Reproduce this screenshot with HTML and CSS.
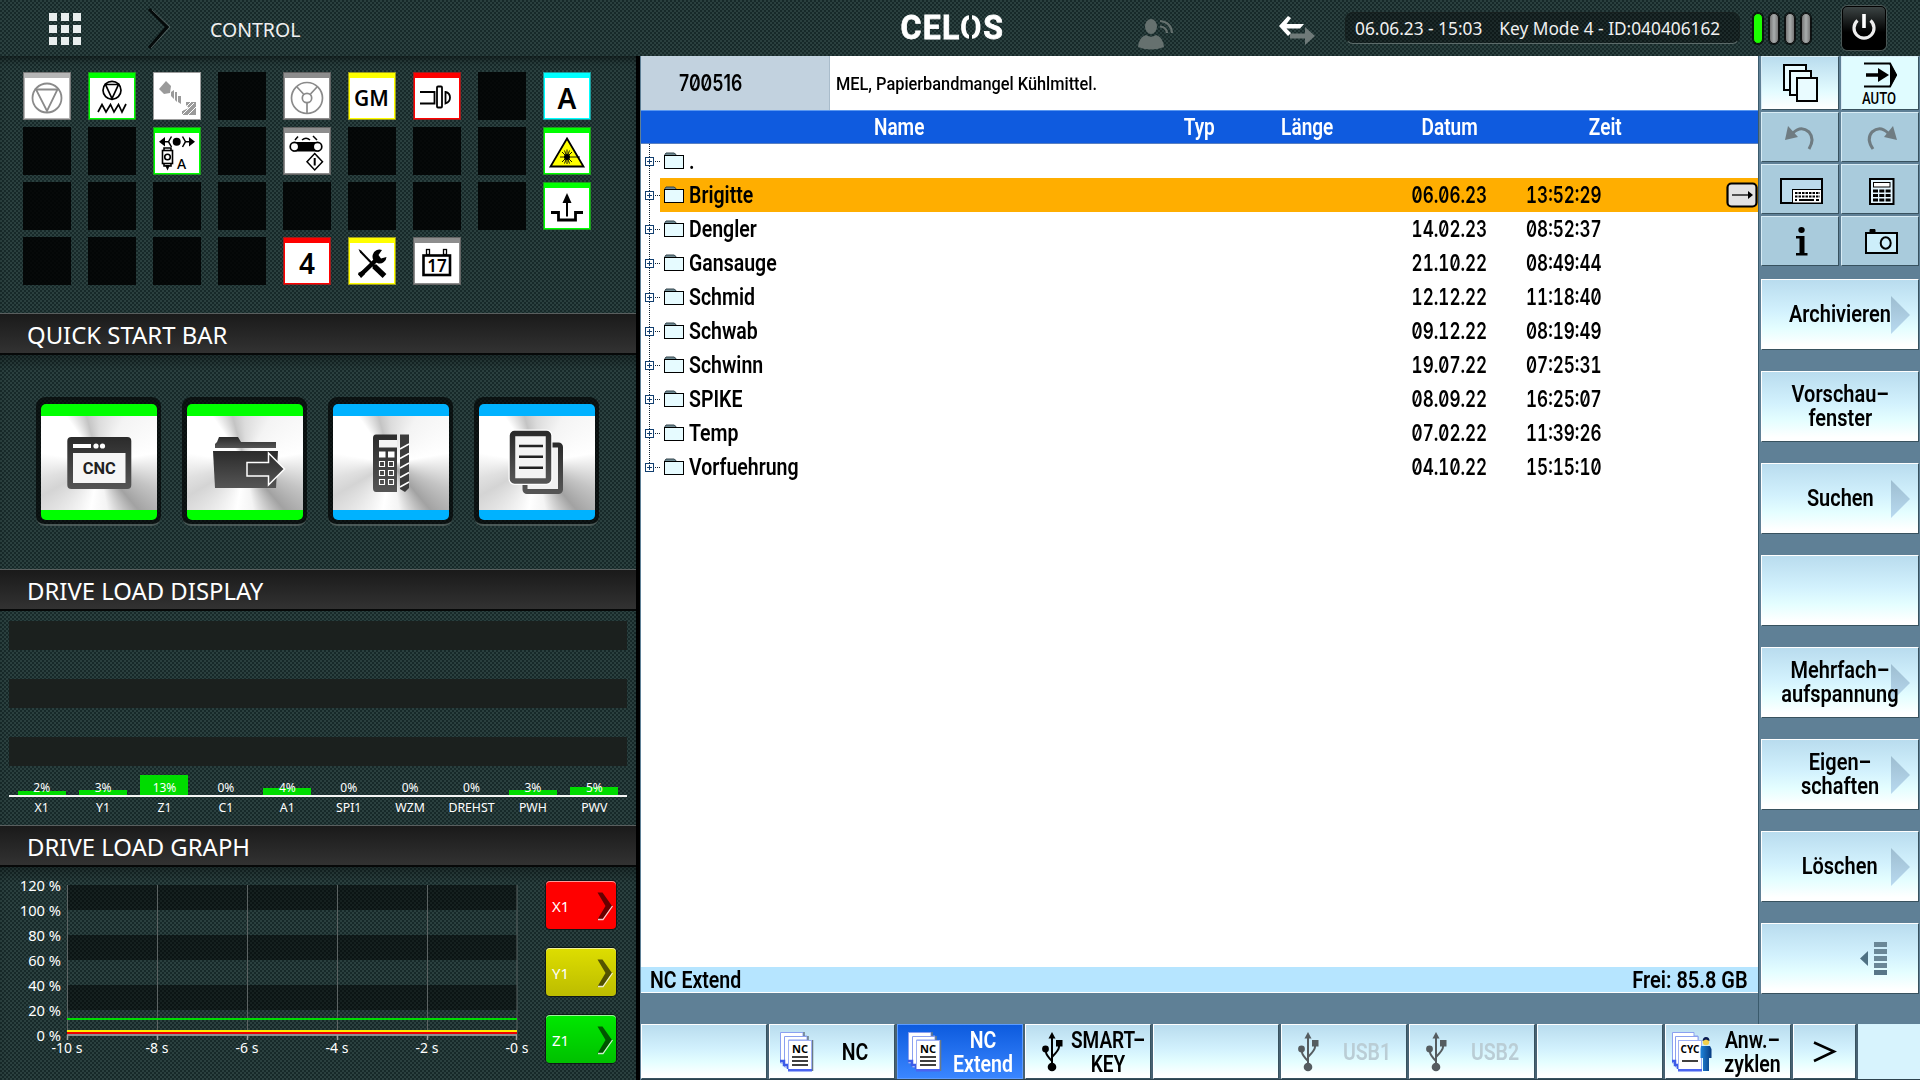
FILE: index.html
```html
<!DOCTYPE html>
<html lang="de">
<head>
<meta charset="utf-8">
<title>CELOS Control</title>
<link rel="stylesheet" href="styles.css">
</head>
<body>
<svg class="defs" width="0" height="0">
  <defs>
    <linearGradient id="ink" x1="0" y1="0" x2="0" y2="1"><stop offset="0" stop-color="#2b2b2b"/><stop offset="1" stop-color="#555"/></linearGradient>
    <linearGradient id="tri" x1="0" y1="0" x2="0" y2="1"><stop offset="0" stop-color="#9dbdd0"/><stop offset="1" stop-color="#b9daf0"/></linearGradient>
    <linearGradient id="man" x1="0" y1="0" x2="1" y2="0"><stop offset="0" stop-color="#1f86dc"/><stop offset="1" stop-color="#063a80"/></linearGradient>
    <symbol id="node" viewBox="0 0 48 34">
      <path d="M14 17.500H19" stroke="#102030" stroke-dasharray="1 1"/>
      <rect x="4.500" y="13.500" width="8" height="8" fill="#fff" stroke="#123f70"/><path d="M6 17.500H11M8.500 15V20" stroke="#123f70"/>
      <path d="M24 12V10.500L25 9H33L35 10.500V12Z" fill="#6f8a92" stroke="#33454d"/>
      <rect x="23.500" y="11.500" width="19" height="13" fill="#e6fbff" stroke="#000"/>
    </symbol>
    <symbol id="tree" viewBox="0 0 48 34"><path d="M8.500 0V34" stroke="#102030" stroke-dasharray="1 1"/><use href="#node"/></symbol>
    <symbol id="leaf" viewBox="0 0 48 34"><path d="M8.500 0V14" stroke="#102030" stroke-dasharray="1 1"/><use href="#node"/></symbol>
    <symbol id="usb" viewBox="1038 1025 28 54">
      <g fill="none" stroke="currentColor" stroke-width="2"><path d="M1052 1038V1066M1046 1049V1052Q1046 1055 1052 1061M1059 1044V1047Q1059 1050 1052 1057"/></g>
      <g fill="currentColor"><path d="M1052 1032L1055.500 1038.500H1048.500Z"/><circle cx="1052" cy="1067" r="4.300"/><circle cx="1045.500" cy="1049" r="3.400"/><rect x="1056" y="1040" width="6.500" height="6.500"/></g>
    </symbol>
    <symbol id="pages" viewBox="776 1025 40 54">
      <path d="M780.500 1032.500H803V1036H807V1040H788V1063H780.500Z" fill="#fff" stroke="#8ba0f0"/>
      <path d="M784.500 1036.500H807V1040H788.500V1067H784.500Z" fill="#fff" stroke="#8ba0f0"/>
      <path d="M780 1061H784V1065H788V1069" fill="none" stroke="#3c5ce8" stroke-width="2.500"/>
      <path d="M804 1032V1036M808 1036V1040M812.500 1040V1071" stroke="#6a7a86" stroke-width="1.500"/>
      <rect x="788.500" y="1040.500" width="23" height="30" fill="#fff" stroke="#9fb0f5"/>
      <rect x="788" y="1069" width="24" height="2.500" fill="#4a64f0"/>
    </symbol>
    <symbol id="chev" viewBox="0 0 18 30"><path d="M1.500 1.500H6.500L16 15L6.500 28.500H1.500L9.500 15Z" fill="#000" fill-opacity=".6"/><path d="M2 28.500H7L16.500 15" fill="none" stroke="#fff" stroke-opacity=".8" stroke-width="1.300"/></symbol>
    <symbol id="more" viewBox="0 0 20 38"><path d="M0 0L19 19L0 38Z" fill="url(#tri)"/></symbol>
  </defs>
</svg>

<div class="screen">
  <header class="top weave">
    <svg width="1920" height="56" viewBox="0 0 1920 56" class="top-art">
      <g fill="#e9eeee"><path d="M49 13h8v8h-8zM61 13h8v8h-8zM73 13h8v8h-8zM49 25h8v8h-8zM61 25h8v8h-8zM73 25h8v8h-8zM49 37h8v8h-8zM61 37h8v8h-8zM73 37h8v8h-8z"/></g>
      <path d="M149 9L167 27L149 48" fill="none" stroke="#050a0a" stroke-width="3"/><path d="M152 10L170 27L151 48" fill="none" stroke="#77817f" stroke-opacity=".6"/>
      <g fill="#66716f"><ellipse cx="1151" cy="26.500" rx="6" ry="7.500"/><path d="M1138 47Q1139 37 1146 35Q1151 38.500 1156 35Q1163 37 1164 47Q1151 52 1138 47Z"/></g>
      <g fill="none" stroke="#66716f" stroke-width="2.200"><path d="M1160 21Q1171 22 1172 33M1160 26.500Q1166.500 27 1167 33"/></g>
      <path d="M1315 36L1305 27V33.500H1290V38.500H1305V45Z" fill="#6f7a79"/>
      <path d="M1279 26L1288 16L1291 18L1286.500 24H1304L1300 28.500H1286.500L1291 33L1288 36Z" fill="#fff"/>
    </svg>
    <h1 class="title">CONTROL</h1>
    <div class="brand"><span>CEL</span><span class="brand-o">O</span><span>S</span></div>
    <div class="info"><span class="info-date">06.06.23 - 15:03</span><span>Key Mode 4 - ID:040406162</span></div>
    <div class="pills"><i class="on"></i><i></i><i></i><i></i></div>
    <button class="power"><svg width="44" height="44" viewBox="0 0 44 44"><path d="M15.500 14.500A10 10 0 1 0 28.500 14.500" fill="none" stroke="#eee" stroke-width="3.200"/><path d="M22 8V22" stroke="#fff" stroke-width="3.600"/></svg></button>
  </header>

  <aside class="left weave">
    <section class="status">
      <div class="tile plain silver"><svg viewBox="0 0 48 48"><g fill="none" stroke="#8a8a8a" stroke-width="1.800"><circle cx="24" cy="26" r="14.500"/><path d="M13 17.500H34.500L24 39Z"/></g></svg></div>
      <div class="tile green"><svg viewBox="0 0 48 48"><g fill="none" stroke="#000" stroke-width="1.700"><circle cx="24" cy="18.300" r="9"/><path d="M17.500 12.500H30.500L24 26.500ZM10 40L14 32.500L18 40L22.500 32.500L26 40L30.500 32.500L34 40L38 32"/></g></svg></div>
      <div class="tile white"><svg viewBox="0 0 48 48"><g fill="#9a9a9a"><path d="M13 9L18 14L17 21L11 22L6 17Z"/><path d="M18 20L21 18V27L18 24ZM22 20L24 20V30L22 28ZM25 24H28V32L25 30Z"/><path d="M33 30H43V43H29V39L36 36L33 33Z"/></g><path d="M29 43L41 31M34 44L43 35M29 39L38 30" stroke="#fff" stroke-width="1"/></svg></div>
      <div class="tile"></div>
      <div class="tile grey"><svg viewBox="0 0 48 48"><g fill="none" stroke="#8a8a8a" stroke-width="1.700"><circle cx="24" cy="26" r="15.500"/><circle cx="24" cy="26" r="4.700"/><path d="M20.500 22L14 15M27.500 22L34 15M24 31V41"/></g></svg></div>
      <div class="tile yellow"><svg viewBox="0 0 48 48"><text x="23.500" y="33.800" class="gm">GM</text></svg></div>
      <div class="tile red"><svg viewBox="0 0 48 48"><g fill="#fff" stroke="#000" stroke-width="1.800"><path d="M7 20H21.500V31.500H7"/><rect x="24" y="14.500" width="5" height="21" rx="1"/><path d="M32.500 20Q37 21 37 25.500Q37 30 32.500 31.500Z"/></g></svg></div>
      <div class="tile"></div>
      <div class="tile cyan"><svg viewBox="0 0 48 48"><text x="24" y="36.700" class="big">A</text></svg></div>

      <div class="tile"></div><div class="tile"></div>
      <div class="tile green"><svg viewBox="0 0 48 48"><circle cx="23.700" cy="14.700" r="4"/><path d="M6 14.700L12 10V19.500ZM42 14.700L36 10V19.500Z"/><path d="M12 14.700H15M33 14.700H36M18.500 9.500L15.500 14.700L18.500 20M29.500 9.500L32.500 14.700L29.500 20" fill="none" stroke="#000" stroke-width="1.500"/><g fill="none" stroke="#000" stroke-width="1.600"><rect x="9.500" y="23.500" width="10" height="13"/><path d="M11 23V21H18V23M11 37V39H18V37"/><circle cx="14.500" cy="30" r="2.800"/></g><path d="M12 38H17L14.500 43.500Z"/><text x="28.500" y="42" class="small">A</text></svg></div>
      <div class="tile"></div>
      <div class="tile grey"><svg viewBox="0 0 48 48"><rect x="10" y="15" width="26" height="9.500"/><circle cx="11.500" cy="19.700" r="4.300" fill="#fff" stroke="#000" stroke-width="1.700"/><circle cx="34.500" cy="19.700" r="4.300" fill="#fff" stroke="#000" stroke-width="1.700"/><g fill="none" stroke="#000" stroke-width="1.500"><path d="M12 13L15 9.500M19 13Q23 9.500 27 13M34 13L30 9M31.700 26.500L39.500 34.700L31.700 43L24 34.700Z"/><path d="M31.700 31V38.500" stroke-width="2"/></g></svg></div>
      <div class="tile"></div><div class="tile"></div><div class="tile"></div>
      <div class="tile green"><svg viewBox="0 0 48 48"><path d="M24 11.500L40.500 39.500H7.500Z" fill="#ff0" stroke="#000" stroke-width="1.800"/><path d="M24 22.500V37M17 30H37M19 25L29 35M29 25L19 35M21.500 23.500L26.500 36.500M26.500 23.500L21.500 36.500" stroke="#000" stroke-width=".9"/><circle cx="24" cy="30" r="3"/></svg></div>

      <div class="tile"></div><div class="tile"></div><div class="tile"></div><div class="tile"></div><div class="tile"></div><div class="tile"></div><div class="tile"></div><div class="tile"></div>
      <div class="tile green"><svg viewBox="0 0 48 48"><path d="M24 11L28.500 21H19.500Z"/><path d="M24 20V34.500" stroke="#000" stroke-width="2"/><path d="M8 30.500H15.500V38H32.500V30.500H40" fill="none" stroke="#000" stroke-width="2.800"/></svg></div>

      <div class="tile"></div><div class="tile"></div><div class="tile"></div><div class="tile"></div>
      <div class="tile red"><svg viewBox="0 0 48 48"><text x="24" y="36.700" class="big">4</text></svg></div>
      <div class="tile yellow"><svg viewBox="0 0 48 48"><path d="M10.500 12L13 13.500L25 26L23.500 27.500L12 15.500Z"/><path d="M26 29L36.500 39" stroke="#000" stroke-width="5.500"/><path d="M24 27L29 32" stroke="#000" stroke-width="3"/><path d="M11.500 39L24 27L30 21" stroke="#000" stroke-width="4.500" fill="none"/><path d="M10 36L16 33L17 37L13 41Z"/><path d="M34 13A7 7 0 1 0 38.500 20L33 21.500L30.500 18Z"/></svg></div>
      <div class="tile grey"><svg viewBox="0 0 48 48"><rect x="10.500" y="18.500" width="26.500" height="19.500" fill="none" stroke="#000" stroke-width="2.600"/><rect x="13.500" y="12.500" width="3" height="5" fill="#fff" stroke="#000" stroke-width="1.300"/><rect x="30.500" y="12.500" width="3" height="5" fill="#fff" stroke="#000" stroke-width="1.300"/><text x="24" y="34.500" class="day">17</text></svg></div>
    </section>

    <h2 class="bar"><span>QUICK START BAR</span></h2>
    <section class="quick">
      <div class="well"><button class="app g"><svg viewBox="0 0 116 94"><rect x="26.300" y="21" width="64" height="52" rx="4" fill="url(#ink)"/><rect x="32" y="37" width="52.500" height="30" fill="#f6f6f6"/><rect x="32" y="28" width="18" height="4" fill="#fff"/><circle cx="55" cy="30" r="2.600" fill="#fff"/><circle cx="61.500" cy="30" r="2.600" fill="#fff"/><text x="58.300" y="57.500" class="cnc" textLength="33" lengthAdjust="spacingAndGlyphs">CNC</text></svg></button></div>
      <div class="well"><button class="app g"><svg viewBox="0 0 116 94"><path d="M28 32V28L30 26L32 21H51L54 26H89V32Z" fill="url(#ink)"/><path d="M26 35H91L89 72H28Z" fill="url(#ink)"/><path d="M60 46.500H81.500V37L97.500 53L81.500 69V60H60Z" fill="url(#ink)" stroke="#fff" stroke-width="1.500"/></svg></button></div>
      <div class="well"><button class="app b"><svg viewBox="0 0 116 94"><path d="M64 18.500H43Q40 18.500 40 22V72Q40 76 43 76H64Z" fill="url(#ink)"/><rect x="46" y="24" width="18" height="7.500" fill="#f4f4f4"/><g fill="#fff"><rect x="46" y="35.500" width="6.500" height="6"/><rect x="55" y="35.500" width="6.500" height="6"/></g><g fill="none" stroke="#fff" stroke-width="1.100"><path d="M46.500 45.500h5v5h-5zM55.500 45.500h5v5h-5zM46.500 54.500h5v5h-5zM55.500 54.500h5v5h-5zM46.500 63.500h5v5h-5zM55.500 63.500h5v5h-5z"/></g><path d="M67 18.500H76V72L72 76L67 73Z" fill="#3c3c3c"/><path d="M67 33L76 28M67 42.500L76 37.500M67 52L76 47M67 61.500L76 56.500M67 71L76 66" stroke="#fff" stroke-width="1.500"/></svg></button></div>
      <div class="well"><button class="app b"><svg viewBox="0 0 116 94"><rect x="46" y="29" width="35.500" height="46.500" rx="2" fill="#f2f2f2" stroke="url(#ink)" stroke-width="5"/><rect x="33.500" y="17.500" width="36" height="47.500" rx="2" fill="#f4f4f4" stroke="#fff" stroke-width="8"/><rect x="33.500" y="17.500" width="36" height="47.500" rx="2" fill="#f4f4f4" stroke="url(#ink)" stroke-width="5.500"/><path d="M40 30H64M40 40.700H64M40 51.700H64" stroke="#222" stroke-width="2.500"/></svg></button></div>
    </section>

    <h2 class="bar"><span>DRIVE LOAD DISPLAY</span></h2>
    <section class="load">
      <div class="load-band"></div><div class="load-band"></div><div class="load-band"></div>
      <div class="load-cols">
        <div class="col"><i style="height:4px"></i><b>2%</b></div>
        <div class="col"><i style="height:5px"></i><b>3%</b></div>
        <div class="col"><i style="height:20px"></i><b>13%</b></div>
        <div class="col"><i style="height:0"></i><b>0%</b></div>
        <div class="col"><i style="height:7px"></i><b>4%</b></div>
        <div class="col"><i style="height:0"></i><b>0%</b></div>
        <div class="col"><i style="height:0"></i><b>0%</b></div>
        <div class="col"><i style="height:0"></i><b>0%</b></div>
        <div class="col"><i style="height:5px"></i><b>3%</b></div>
        <div class="col"><i style="height:8px"></i><b>5%</b></div>
      </div>
      <div class="load-names"><span>X1</span><span>Y1</span><span>Z1</span><span>C1</span><span>A1</span><span>SPI1</span><span>WZM</span><span>DREHST</span><span>PWH</span><span>PWV</span></div>
    </section>

    <h2 class="bar"><span>DRIVE LOAD GRAPH</span></h2>
    <section class="graph">
      <svg width="540" height="213" viewBox="0 867 540 213" class="chart">
        <g fill="#000" fill-opacity=".5"><rect x="67" y="885" width="450" height="25"/><rect x="67" y="935" width="450" height="25"/><rect x="67" y="985" width="450" height="25"/></g>
        <path d="M67.500 885V1035M157.500 885V1035M247.500 885V1035M337.500 885V1035M427.500 885V1035M517 885V1035" stroke="#5b6262"/>
        <path d="M67 1035H517" stroke="#8b8f8f" stroke-width="2"/><path d="M67.500 1035V1040M157.500 1035V1040M247.500 1035V1040M337.500 1035V1040M427.500 1035V1040M516.500 1035V1040" stroke="#9a9e9e" stroke-width="1.500"/>
        <path d="M67 1019H517" stroke="#0d0" stroke-width="2"/><path d="M67 1033H517" stroke="#e00" stroke-width="2"/><path d="M67 1031H517" stroke="#fe0" stroke-width="2"/>
        <g class="ylab"><text x="61" y="891">120 %</text><text x="61" y="916">100 %</text><text x="61" y="941">80 %</text><text x="61" y="966">60 %</text><text x="61" y="991">40 %</text><text x="61" y="1016">20 %</text><text x="61" y="1041">0 %</text></g>
        <g class="xlab"><text x="67" y="1053">-10 s</text><text x="157" y="1053">-8 s</text><text x="247" y="1053">-6 s</text><text x="337" y="1053">-4 s</text><text x="427" y="1053">-2 s</text><text x="517" y="1053">-0 s</text></g>
      </svg>
      <div class="axes">
        <button class="axis ax-r">X1<svg width="18" height="30"><use href="#chev"/></svg></button>
        <button class="axis ax-y">Y1<svg width="18" height="30"><use href="#chev"/></svg></button>
        <button class="axis ax-g">Z1<svg width="18" height="30"><use href="#chev"/></svg></button>
      </div>
    </section>
  </aside>

  <main class="nc">
    <div class="work">
      <div class="pane">
        <div class="alarm"><div class="alarm-no"><span class="t mono">700516</span></div><div class="alarm-text"><span class="t">MEL, Papierbandmangel Kühlmittel.</span></div></div>
        <div class="thead"><span>Name</span><span>Typ</span><span>Länge</span><span>Datum</span><span>Zeit</span></div>
        <div class="rows">
          <div class="row"><svg class="tree"><use href="#tree"/></svg><span class="name">.</span></div>
          <div class="row sel"><svg class="tree"><use href="#tree"/></svg><span class="name">Brigitte</span><span class="num date">06.06.23</span><span class="num time">13:52:29</span><span class="go"><svg width="32" height="27" viewBox="0 0 32 27"><rect x="1.500" y="1.500" width="29" height="23" rx="4" fill="#e2e2e2" stroke="#000" stroke-width="2.200"/><path d="M6 13H24" stroke="#000" stroke-width="1.300"/><path d="M22 9L27 13L22 17Z"/></svg></span></div>
          <div class="row"><svg class="tree"><use href="#tree"/></svg><span class="name">Dengler</span><span class="num date">14.02.23</span><span class="num time">08:52:37</span></div>
          <div class="row"><svg class="tree"><use href="#tree"/></svg><span class="name">Gansauge</span><span class="num date">21.10.22</span><span class="num time">08:49:44</span></div>
          <div class="row"><svg class="tree"><use href="#tree"/></svg><span class="name">Schmid</span><span class="num date">12.12.22</span><span class="num time">11:18:40</span></div>
          <div class="row"><svg class="tree"><use href="#tree"/></svg><span class="name">Schwab</span><span class="num date">09.12.22</span><span class="num time">08:19:49</span></div>
          <div class="row"><svg class="tree"><use href="#tree"/></svg><span class="name">Schwinn</span><span class="num date">19.07.22</span><span class="num time">07:25:31</span></div>
          <div class="row"><svg class="tree"><use href="#tree"/></svg><span class="name">SPIKE</span><span class="num date">08.09.22</span><span class="num time">16:25:07</span></div>
          <div class="row"><svg class="tree"><use href="#tree"/></svg><span class="name">Temp</span><span class="num date">07.02.22</span><span class="num time">11:39:26</span></div>
          <div class="row"><svg class="tree"><use href="#leaf"/></svg><span class="name">Vorfuehrung</span><span class="num date">04.10.22</span><span class="num time">15:15:10</span></div>
        </div>
        <div class="foot"><span class="t">NC Extend</span><span class="t r">Frei: 85.8 GB</span></div>
      </div>

      <nav class="side">
        <div class="mini">
          <button class="mk lit"><svg viewBox="1761 57 78 52"><g fill="#e9fbff" stroke="#000" stroke-width="2"><rect x="1784" y="65" width="22" height="25"/><rect x="1790" y="71" width="21" height="24"/><rect x="1797" y="78" width="20" height="23"/></g></svg></button>
          <button class="mk pale"><svg viewBox="1841 57 78 52"><path d="M1864 63.500H1890L1896 75L1890 86.500H1864" fill="none" stroke="#000" stroke-width="2"/><path d="M1890 63L1897 75L1890 87Z"/><path d="M1866 75H1880" stroke="#000" stroke-width="3.500"/><path d="M1878 68L1889 75L1878 82Z"/><text x="1879" y="103.700" class="auto" textLength="34" lengthAdjust="spacingAndGlyphs">AUTO</text></svg></button>
          <button class="mk"><svg viewBox="1761 113 78 48"><path d="M1809 149Q1815 139 1809 132Q1801 125 1793 133" fill="none" stroke="#6f7c82" stroke-width="3"/><path d="M1788 126L1785 140L1798 137Z" fill="#6f7c82"/></svg></button>
          <button class="mk"><svg viewBox="1841 113 78 48"><path d="M1873 149Q1866 139 1872 132Q1880 125 1888 133" fill="none" stroke="#6f7c82" stroke-width="3"/><path d="M1893 126L1897 140L1884 137Z" fill="#6f7c82"/></svg></button>
          <button class="mk"><svg viewBox="1761 165 78 48"><rect x="1781" y="179" width="41" height="24" fill="#cdeafa" fill-opacity=".5" stroke="#000" stroke-width="2"/><rect x="1792.500" y="189.500" width="29" height="13.500" fill="#fff" stroke="#000"/><path d="M1795 193H1820M1795 196.500H1820" stroke="#000" stroke-width="2.200" stroke-dasharray="2.500 1"/><path d="M1795 200H1797M1799 200H1814M1816 200H1819" stroke="#000" stroke-width="2"/></svg></button>
          <button class="mk"><svg viewBox="1841 165 78 48"><rect x="1870" y="179" width="23.500" height="25" fill="#e4f6ff" stroke="#000" stroke-width="2"/><rect x="1873.500" y="182.500" width="16.500" height="4.500" fill="#fff" stroke="#000"/><path d="M1873 191H1891M1873 195.500H1891M1873 200H1891" stroke="#000" stroke-width="3.200" stroke-dasharray="5 1.300"/></svg></button>
          <button class="mk"><svg viewBox="1761 217 78 48"><ellipse cx="1801.500" cy="230" rx="3.200" ry="3"/><path d="M1796 236H1804.500V253H1807.500V255.500H1796V253H1799.500V238.500H1796Z"/></svg></button>
          <button class="mk"><svg viewBox="1841 217 78 48"><path d="M1870 232V229.500H1875V232" stroke="#000" fill="#000"/><rect x="1866" y="233" width="31" height="20" fill="#cdeefa" stroke="#000" stroke-width="2"/><ellipse cx="1885.700" cy="243" rx="5" ry="5.700" fill="none" stroke="#000" stroke-width="2"/></svg></button>
        </div>
        <div class="keys">
          <button class="vk"><span>Archivieren</span><svg class="more"><use href="#more"/></svg></button>
          <button class="vk"><span>Vorschau–<br>fenster</span></button>
          <button class="vk"><span>Suchen</span><svg class="more"><use href="#more"/></svg></button>
          <button class="vk"></button>
          <button class="vk"><span>Mehrfach–<br>aufspannung</span><svg class="more"><use href="#more"/></svg></button>
          <button class="vk"><span>Eigen–<br>schaften</span><svg class="more"><use href="#more"/></svg></button>
          <button class="vk"><span>Löschen</span><svg class="more"><use href="#more"/></svg></button>
          <button class="vk"><svg class="collapse" width="158" height="71" viewBox="1761 923 158 71"><path d="M1860 958.500L1868 951V966Z" fill="#4f7183"/><g fill="#6a8797"><rect x="1874" y="942" width="13" height="5"/><rect x="1874" y="949" width="13" height="5"/><rect x="1874" y="956" width="13" height="5"/><rect x="1874" y="963" width="13" height="5"/><rect x="1874" y="970" width="13" height="5" fill="#587688"/></g></svg></button>
        </div>
      </nav>
    </div>

    <nav class="soft">
      <button class="hk"></button>
      <button class="hk"><svg class="pg" viewBox="776 1025 40 54"><use href="#pages" x="776" y="1025" width="40" height="54"/><text x="800" y="1053" class="pgt">NC</text><path d="M792 1057H808M792 1061H808M792 1065H808" stroke="#000" stroke-width="1.500"/></svg><span>NC</span></button>
      <button class="hk active"><svg class="pg" viewBox="776 1025 40 54"><use href="#pages" x="776" y="1025" width="40" height="54"/><text x="800" y="1053" class="pgt">NC</text><path d="M792 1057H808M792 1061H808M792 1065H808" stroke="#000" stroke-width="1.500"/></svg><span>NC<br>Extend</span></button>
      <button class="hk wide"><svg class="us"><use href="#usb"/></svg><span>SMART–<br>KEY</span></button>
      <button class="hk"></button>
      <button class="hk off"><svg class="us"><use href="#usb"/></svg><span>USB1</span></button>
      <button class="hk off"><svg class="us"><use href="#usb"/></svg><span>USB2</span></button>
      <button class="hk"></button>
      <button class="hk"><svg class="cy" viewBox="1669 1025 46 54"><path d="M1672.500 1032.500H1694V1036H1698V1040H1678V1063H1672.500Z" fill="#fff" stroke="#8ba0f0"/><path d="M1675.500 1036.500H1698V1067H1675.500Z" fill="#fff" stroke="#8ba0f0"/><path d="M1672 1061H1675V1065H1678V1069" fill="none" stroke="#3c5ce8" stroke-width="2.500"/><rect x="1678.500" y="1040.500" width="23" height="30" fill="#fff" stroke="#9fb0f5"/><rect x="1678" y="1069" width="24" height="2.500" fill="#4a64f0"/><path d="M1682 1061H1698" stroke="#000" stroke-width="1.500"/><path d="M1701 1046H1710L1711.500 1049V1058H1709V1071H1703V1058H1700.500V1049Z" fill="url(#man)"/><circle cx="1706" cy="1042" r="3.200" fill="#f3d04e"/><path d="M1702.500 1041Q1703 1037 1706 1037Q1709.500 1037 1709.500 1041L1706 1039.500Z" fill="#0a1a50"/><text x="1690" y="1053" class="pgt" textLength="19" lengthAdjust="spacingAndGlyphs">CYC</text></svg><span>Anw.–<br>zyklen</span></button>
      <button class="hk next"><svg viewBox="1793 1025 63 54"><path d="M1814 1042.500L1834 1051.500L1814 1061" fill="none" stroke="#000" stroke-width="2.500"/></svg></button>
      <div class="tail"></div>
    </nav>
  </main>
</div>
</body>
</html>
```
FILE: styles.css
```css
* { box-sizing: border-box; }
body { margin: 0; background: #000; overflow: hidden; font-family: "Noto Sans", "Open Sans", sans-serif; }
button { font: inherit; border: 0; padding: 0; margin: 0; color: inherit; background: none; }
h1, h2 { margin: 0; font-weight: 400; }
.defs { position: absolute; }

.screen {
  width: 1920px; height: 1080px;
  display: grid; grid-template: 56px 1024px / 636px 1280px; column-gap: 4px;
}
.weave {
  background-color: #172929;
  background-image:
    radial-gradient(circle at 1px 1px, #38504e 0, #38504e .5px, transparent 1px),
    radial-gradient(circle at 3px 3px, #38504e 0, #38504e .5px, transparent 1px);
  background-size: 4px 4px;
}

/* top bar */
.top { grid-column: 1 / 3; width: 1920px; display: flex; align-items: center; color: #f0f0f0; position: relative; }
.top-art { position: absolute; inset: 0; }
.title { width: 891px; flex: none; padding: 4px 0 0 210px; font-size: 19.5px; line-height: 56px; }
.brand {
  width: 454px; flex: none; font: 700 34px/44px "Roboto", sans-serif; color: #fff; letter-spacing: 1.5px;
  transform: scaleX(.94); transform-origin: left; padding-left: 10px; margin-top: -2px; -webkit-text-stroke: .8px #fff;
}
.brand-o { background: linear-gradient(90deg, #fff 42%, #1c2b2b 42%, #1c2b2b 52%, #fff 52%); -webkit-background-clip: text; color: transparent; -webkit-text-stroke: 0; }
.info {
  width: 395px; flex: none; height: 32px; border-radius: 8px; padding-left: 9px;
  display: flex; align-items: center; gap: 17px; font-size: 17.3px; white-space: nowrap;
  background: rgba(0, 0, 0, .35); border: 1px solid #17201f; border-bottom-color: #5d6b6a;
}
.pills { display: flex; gap: 6px; margin-left: 13px; }
.pills i { width: 10px; height: 31px; border-radius: 5px; background: linear-gradient(90deg, #777, #a9adad, #777); border: 1px solid #111; box-shadow: 0 0 0 1px #0b1212; }
.pills .on { background: #1cff00; }
.power { margin-left: auto; margin-right: 34px; width: 44px; height: 44px; border-radius: 5px; border: 1px solid #000; background: linear-gradient(#3c4444, #000 60%); box-shadow: 0 0 0 1px #4a5655; }
.power svg { display: block; margin: -1px; }

/* left panel */
.left { display: flex; flex-direction: column; color: #fff; box-shadow: inset 0 8px 10px -6px rgba(0, 0, 0, .6); }
.status { height: 257px; padding: 16px 0 0 23px; display: grid; grid-template: repeat(4, 48px) / repeat(9, 48px); gap: 7px 17px; }
.tile { width: 48px; height: 48px; background: rgba(0, 0, 0, .85); }
.tile:has(svg) { background: #fff; border: 2px solid; border-top-width: 6px; outline: 1px solid rgba(60, 60, 60, .5); outline-offset: -1px; }
.tile svg { display: block; width: 48px; height: 48px; margin: -6px 0 0 -2px; overflow: visible; }
.tile.silver { border-color: #b6b6b6; }
.tile.grey { border-color: #8d8d8d; }
.tile.green { border-color: #0f0; }
.tile.yellow { border-color: #ff0; }
.tile.red { border-color: #f00; }
.tile.cyan { border-color: #0ff; }
.tile.white { border-color: #fff; }
.tile text { text-anchor: middle; fill: #000; }
.gm { font-size: 21px; font-weight: 600; }
.big { font-size: 28px; font-weight: 600; }
.small { font-size: 14px; font-weight: 500; }
.day { font-size: 17px; font-weight: 600; }

.bar {
  height: 42px; padding-left: 27px; font-size: 23.9px; line-height: 42px; color: #fff; white-space: nowrap;
  background: linear-gradient(#1a1a1a, #323232); border-top: 1px solid #5a5f5f; border-bottom: 2px solid #060808;
}

.quick { height: 214px; padding: 42px 0 0 36px; display: flex; gap: 21px; background: linear-gradient(rgba(0, 0, 0, .3), transparent 16px); }
.well { width: 125px; height: 129px; padding: 7px 4px 0 5px; border-radius: 9px; background: rgba(0, 0, 0, .65); border-bottom: 2px solid #4a5856; }
.app {
  display: block; width: 116px; height: 116px; border-radius: 5px; overflow: hidden; border: solid; border-width: 12px 0 10px;
  background:
    conic-gradient(from 0deg at 50% 50%, #dcdcdc, #f4f4f4 30deg, #fff 80deg, #c4c4c4 115deg, #a2a2a2 140deg, #f4f4f4 170deg, #fff 190deg, #d4d4d4 240deg, #e0e0e0 255deg, #fff 280deg, #fff 325deg, #c4c4c4 345deg, #dcdcdc);
}
.app.g { border-color: #0f0; }
.app.b { border-color: #00b2ff; }
.app svg { display: block; width: 116px; height: 94px; }
.cnc { font: 700 17px "Roboto", sans-serif; text-anchor: middle; fill: #222; }

.load { height: 214px; padding: 10px 9px 0; }
.load-band { height: 29px; margin-bottom: 29px; background: #1b201e; }
.load-band:nth-child(3) { margin-bottom: 7px; }
.load-cols { height: 24px; padding: 0 2px; display: grid; grid-template-columns: repeat(10, 1fr); border-bottom: 2px solid #f4f4f4; }
.col { display: grid; align-items: end; justify-items: center; }
.col i, .col b { grid-area: 1 / 1; }
.col i { width: 48px; background: #00dc00; }
.col b { font-size: 12px; font-weight: 400; line-height: 15px; }
.load-names { padding: 2px 2px 0; display: grid; grid-template-columns: repeat(10, 1fr); text-align: center; font-size: 12.3px; line-height: 18px; }

.graph { height: 213px; display: flex; background: linear-gradient(rgba(0, 0, 0, .3), transparent 16px); }
.chart text { font-size: 14px; fill: #fff; }
.chart .ylab text { font-size: 14.7px; }
.ylab { text-anchor: end; }
.xlab { text-anchor: middle; }
.axes { padding: 14px 0 0 6px; display: flex; flex-direction: column; gap: 19px; }
.axis { width: 70px; height: 48px; padding: 1px 2px 0 6px; display: flex; align-items: center; justify-content: space-between; font-size: 15px; color: #fff; border-radius: 4px; box-shadow: inset 0 1px rgba(255, 255, 255, .6), 0 0 0 1px #101818; }
.ax-r { background: #f00; }
.ax-y { background: linear-gradient(#dede00, #bcbc00); }
.ax-g { background: linear-gradient(#00e800, #00c000); }

/* numerical control */
.nc { width: 1280px; background: #5f8096; font-family: "Roboto", sans-serif; font-weight: 500; color: #000; padding-left: 1px; display: flex; flex-direction: column; }
.work { height: 968px; display: flex; }
.pane { width: 1117px; height: 937px; background: #fff; display: flex; flex-direction: column; }
.t { display: inline-block; transform-origin: left center; white-space: nowrap; }
.alarm { height: 54px; display: flex; line-height: 54px; }
.alarm-no { width: 189px; padding-left: 38px; background: #c2d2df; border-right: 1px solid #a9bccb; }
.mono { font: 600 23px/54px "Inter", sans-serif; font-feature-settings: "zero"; transform: scaleX(.77); }
.alarm-text { padding: 1px 0 0 6px; font-size: 19px; }
.alarm-text .t { transform: scaleX(.86); }
.thead { height: 34px; background: #0f5bdf; border-top: 1px solid #5a97f0; border-bottom: 1px solid #5a80c0; color: #fff; font-size: 23.5px; font-weight: 600; line-height: 33px; display: grid; grid-template-columns: 516px 84px 132px 154px 156px; justify-items: center; }
.thead span { display: block; transform: scaleX(.81); }
.rows { flex: 1; }
.row { height: 34px; display: grid; grid-template-columns: 48px 715px 122px 200px 32px; align-items: center; font-size: 23.5px; font-weight: 600; line-height: 34px; white-space: nowrap; }
.tree { width: 48px; height: 34px; display: block; }
.name { transform: scaleX(.83); transform-origin: left; }
.num { font: 600 22.5px/34px "Inter", sans-serif; font-feature-settings: "zero", "tnum"; transform: scaleX(.76); transform-origin: left; }
.date { padding-left: 10px; }
.sel { background: linear-gradient(90deg, #fff 19px, #ffae00 19px); }
.go { align-self: end; height: 30px; }
.foot { height: 26px; display: flex; justify-content: space-between; padding: 0 10px 0 9px; background: #b6e5ff; border-bottom: 1px solid #fff; font-size: 23.5px; font-weight: 600; line-height: 26px; }
.foot .t { transform: scaleX(.83); }
.foot .r { transform-origin: right center; transform: scaleX(.85); }

.side { width: 161px; padding-left: 2px; border-left: 1px solid #3a5a6c; }
.mini { height: 211px; display: grid; grid-template: 54px 50px 50px 50px / 78px 78px; gap: 2px; }
.mk { background: #a9cbdc; border-top: 1px solid #d8ecf5; border-left: 1px solid #d8ecf5; border-bottom: 1px solid #38525f; border-right: 1px solid #38525f; }
.mk svg { display: block; width: 78px; height: 100%; margin-left: -1px; }
.mk.lit { background: linear-gradient(#b9dcee, #e2fbff 65%, #fff); }
.mk.pale { background: #e0fcff; }
.auto { font: 500 17px "Roboto", sans-serif; text-anchor: middle; }
.keys { padding-top: 12px; display: flex; flex-direction: column; gap: 21px; }
.vk, .hk { background: linear-gradient(#b9dcee, #d2f1fd 45%, #e4feff 70%, #fff 95%); border: 1px solid #fff; border-bottom-color: #38525f; border-right-color: #38525f; font-weight: 600; }
.vk { width: 158px; height: 71px; display: grid; align-items: center; font-size: 23.5px; line-height: 24px; }
.vk > * { grid-area: 1 / 1; }
.vk span { justify-self: center; transform: scaleX(.85); z-index: 1; white-space: nowrap; margin-top: -1px; }
.more { width: 20px; height: 38px; justify-self: end; margin-right: 7px; }
.collapse { display: block; margin: -1px; }

.soft { height: 56px; display: flex; gap: 2px; background: #476273; border-bottom: 1px solid #2c424e; }
.hk { width: 126px; height: 55px; display: flex; align-items: center; font-size: 23.5px; line-height: 24px; flex: none; }
.hk span { flex: 1; text-align: center; transform: scaleX(.83); white-space: nowrap; }
.hk svg { flex: none; }
.hk.wide span { margin: 0 -4px 0 -10px; transform: scaleX(.81); }
.hk.active { background: linear-gradient(#0d5bde, #3a86ff); border-color: #5b9bff; color: #fff; }
.hk.off { color: #bacdd5; }
.off .us { color: #555c60; }
.pg { width: 40px; height: 54px; margin-left: 6px; }
.us { width: 28px; height: 54px; margin: 0 6px 0 12px; }
.cy { width: 46px; height: 54px; margin-left: 3px; }
.hk.next { width: 63px; }
.hk.next svg { width: 63px; height: 54px; margin-left: -1px; }
.pgt { font: 700 11px "Noto Sans", sans-serif; text-anchor: middle; }
.tail { flex: 1; background: #d7f3fd; }
```
